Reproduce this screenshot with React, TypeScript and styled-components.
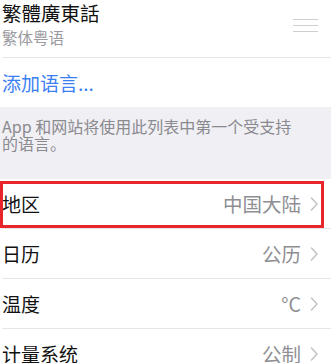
import styled, { createGlobalStyle } from "styled-components";

const GlobalStyle = createGlobalStyle`
  html, body {
    margin: 0;
    padding: 0;
    background: #fff;
  }
  body {
    font-family: "Noto Sans CJK SC", "Noto Sans", sans-serif;
    -webkit-font-smoothing: antialiased;
  }
`;

const settings = [
  { label: "地区", value: "中国大陆", marked: true },
  { label: "日历", value: "公历" },
  { label: "温度", value: "°C" },
  { label: "计量系统", value: "公制" },
];

function Chevron() {
  return (
    <svg width="8" height="14" viewBox="0 0 8 14">
      <polyline
        points="1.5,1 7,7 1.5,13"
        fill="none"
        stroke="#c4c4c9"
        strokeWidth="1.6"
        strokeLinecap="round"
        strokeLinejoin="round"
      />
    </svg>
  );
}

function App() {
  return (
    <>
      <GlobalStyle />
      <Page>
        <LanguageRow>
          <LanguageText>
            <Title>繁體廣東話</Title>
            <Subtitle>繁体粤语</Subtitle>
          </LanguageText>
          <Handle>
            <span />
            <span />
            <span />
          </Handle>
        </LanguageRow>
        <AddRow>添加语言...</AddRow>
        <Footer>App 和网站将使用此列表中第一个受支持的语言。</Footer>
        {settings.map((item) => (
          <Row key={item.label}>
            <Label>{item.label}</Label>
            <Value>
              {item.value}
              <Chevron />
            </Value>
            {item.marked && <Marker />}
          </Row>
        ))}
      </Page>
    </>
  );
}

export default App;

const Page = styled.div`
  width: 331px;
  height: 363px;
  overflow: hidden;
  background: #fff;
`;

const LanguageRow = styled.div`
  display: flex;
  justify-content: space-between;
  align-items: flex-start;
  height: 58px;
  box-sizing: border-box;
  margin-left: 2px;
  padding: 1px 13px 0 0;
  border-bottom: 1px solid #e6e6ea;
`;

const LanguageText = styled.div`
  display: flex;
  flex-direction: column;
`;

const Title = styled.div`
  font-size: 19.5px;
  line-height: 24px;
  color: #111;
`;

const Subtitle = styled.div`
  font-size: 15.5px;
  line-height: 24px;
  color: #9a9a9f;
`;

const Handle = styled.div`
  display: flex;
  flex-direction: column;
  gap: 4.5px;
  width: 25px;
  padding-top: 17.5px;

  span {
    display: block;
    height: 1.5px;
    background: #cfcfd3;
  }
`;

const AddRow = styled.div`
  display: flex;
  align-items: center;
  height: 49px;
  padding-left: 2px;
  font-size: 19px;
  color: #3a80f2;
`;

const Footer = styled.div`
  height: 72px;
  box-sizing: border-box;
  padding: 11px 28px 0 2px;
  background: #f0eff4;
  font-size: 16px;
  line-height: 17px;
  color: #8a8a8f;
`;

const Row = styled.div`
  position: relative;
  display: flex;
  justify-content: space-between;
  align-items: center;
  height: 49px;
  margin-left: 2px;
  padding-right: 13px;
  border-bottom: 1px solid #e6e6ea;
`;

const Label = styled.span`
  font-size: 19px;
  color: #111;
`;

const Value = styled.span`
  display: flex;
  align-items: center;
  gap: 9px;
  font-size: 19.5px;
  color: #8e8e93;
`;

const Marker = styled.div`
  position: absolute;
  left: -2px;
  top: 2px;
  width: 324px;
  height: 47px;
  box-sizing: border-box;
  border: 3px solid #e8252b;
  pointer-events: none;
`;
